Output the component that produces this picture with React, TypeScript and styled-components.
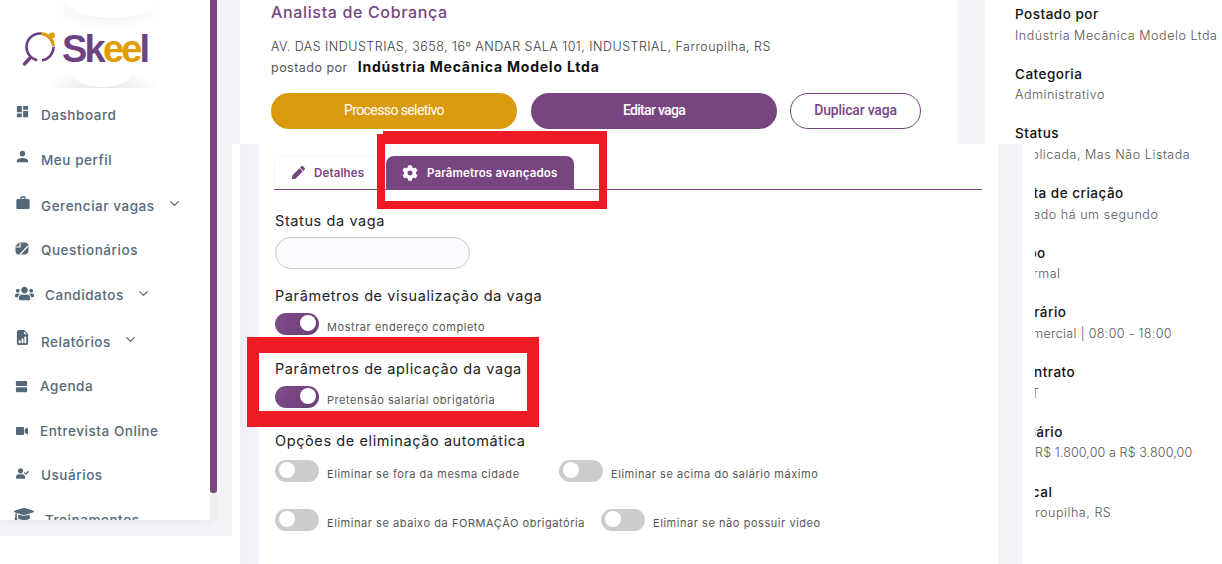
import * as React from 'react';
import styled, { createGlobalStyle } from 'styled-components';
import { FaCog, FaGraduationCap, FaPen, FaUserCheck, FaUsers, FaVideo } from 'react-icons/fa';
import { MdDashboard, MdPerson, MdViewAgenda, MdWork } from 'react-icons/md';
import { BsFileEarmarkBarGraphFill } from 'react-icons/bs';
import { FiChevronDown } from 'react-icons/fi';

const purple = '#784580';
const gold = '#d99a0e';
const panelGray = '#f3f4f9';
const menuGray = '#56697a';
const red = '#ed1c24';
const font = `Inter, 'Noto Sans', sans-serif`;

const GlobalStyle = createGlobalStyle`
  html, body {
    background: #fff;
    margin: 0;
    overflow: hidden;
  }
`;

const Page = styled.div`
  display: grid;
  font-family: ${font};
  grid-template-columns: 240px 775px 1fr;
  grid-template-rows: 144px 1fr;
  height: 564px;
  overflow: hidden;
  width: 1222px;
`;

/* left column */
const LeftColumn = styled.div`
  background: linear-gradient(${panelGray}, ${panelGray}) right top / 8px 144px no-repeat;
  grid-row: 1 / 3;
`;

const SidePanel = styled.div`
  background: ${panelGray};
  display: flex;
  height: 536px;
  width: 232px;
`;

const Sidebar = styled.aside`
  background: #fff;
  box-shadow: 0 2px 8px rgba(0, 0, 0, .05);
  height: 520px;
  overflow: hidden;
  width: 210px;
`;

const ScrollTrack = styled.div`
  background: #eee;
  border-radius: 0 0 3px 3px;
  height: 520px;
  width: 7px;
`;

const ScrollThumb = styled.div`
  background: ${purple};
  border-radius: 0 0 3px 3px;
  height: 493px;
`;

const LogoBlock = styled.div`
  align-items: center;
  box-sizing: border-box;
  display: flex;
  gap: 6px;
  height: 92px;
  padding: 4px 0 0 22px;
  position: relative;

  &::before, &::after {
    content: '';
    left: 45px;
    position: absolute;
    width: 115px;
  }

  &::before {
    background:
      radial-gradient(ellipse 46px 18px at 58% 0, #fff 98%, transparent 100%),
      radial-gradient(ellipse 58px 22px at 55% 30%, #eeeeee 0%, transparent 100%);
    height: 30px;
    top: 0;
  }

  &::after {
    background:
      radial-gradient(ellipse 29px 13px at 50% 0, #fff 98%, transparent 100%),
      radial-gradient(ellipse 58px 18px at 50% 100%, #e6e6e6 0%, transparent 100%);
    height: 14px;
    top: 74px;
  }
`;

const LogoMark = styled.svg`
  flex: none;
  height: 36px;
  margin-top: 3px;
  width: 34px;
`;

const LogoText = styled.span`
  color: #6b4380;
  font-family: 'Liberation Sans', sans-serif;
  font-size: 38px;
  font-weight: 700;
  letter-spacing: -2.8px;
  line-height: 1;
  position: relative;
  top: 1px;
`;

const LogoAccent = styled.span`
  color: #e09c00;
`;

const MenuItem = styled.div<{ $height: number; $left: number }>`
  align-items: center;
  color: ${menuGray};
  display: flex;
  font-size: 13.5px;
  font-weight: 500;
  height: ${p => p.$height}px;
  letter-spacing: .55px;
  padding-left: ${p => p.$left}px;
  white-space: nowrap;
`;

const MenuIcon = styled.span<{ $width: number; $lift: number }>`
  align-items: center;
  color: #546878;
  display: flex;
  flex: none;
  margin-top: ${p => -2 * p.$lift}px;
  width: ${p => p.$width}px;
`;

const Chevron = styled(FiChevronDown)`
  color: #546878;
  flex: none;
  font-size: 15px;
  margin: -4px 0 0 12px;
`;

/* main column */
const TopRow = styled.div`
  display: flex;
`;

const JobCard = styled.section`
  background: #fff;
  box-sizing: border-box;
  padding-left: 31px;
  width: 717px;
`;

const TopGutter = styled.div`
  background: ${panelGray};
  width: 28px;
`;

const JobTitle = styled.h1`
  color: ${purple};
  font-size: 16px;
  font-weight: 500;
  letter-spacing: .65px;
  line-height: 24px;
  margin: 0 0 13px;
`;

const Address = styled.div`
  color: #3d3d3d;
  font-size: 12.5px;
  font-weight: 300;
  letter-spacing: .48px;
  line-height: 20px;
`;

const PostedBy = styled(Address)`
  color: #555;
  font-weight: 400;
`;

const Company = styled.strong`
  color: #111;
  font-size: 14px;
  font-weight: 700;
  letter-spacing: .78px;
  margin-left: 6px;
`;

const ButtonRow = styled.div`
  display: flex;
  gap: 14px;
  margin-top: 15px;
`;

const ActionButton = styled.button<{ $kind: 'gold' | 'purple' | 'outline' }>`
  background: ${p => (p.$kind === 'gold' ? gold : p.$kind === 'purple' ? purple : '#fff')};
  border: ${p => (p.$kind === 'outline' ? `1px solid ${purple}` : 'none')};
  border-radius: 18px;
  box-sizing: border-box;
  color: ${p => (p.$kind === 'outline' ? purple : '#fff')};
  font-family: Roboto, sans-serif;
  font-size: 14px;
  font-weight: ${p => (p.$kind === 'gold' ? 400 : 500)};
  height: 36px;
  letter-spacing: ${p => (p.$kind === 'outline' ? '-.2px' : p.$kind === 'purple' ? '-.7px' : '-.6px')};
  margin-left: ${p => (p.$kind === 'outline' ? '-1px' : '0')};
  padding: 0 0 3px;
  width: ${p => (p.$kind === 'outline' ? '131px' : '246px')};
`;

const LowerPanel = styled.section`
  background: #fff;
  margin-right: -20px;
  padding-right: 13px;
  position: relative;
  z-index: 1;
`;

const LowerGutter = styled.div`
  background: linear-gradient(to right, #eeeff4, ${panelGray} 19px);
  height: 100%;
  padding: 0 24px 0 19px;
`;

const LowerBody = styled.div`
  background: #fff;
  box-sizing: border-box;
  height: 100%;
  padding: 11px 16px 0 15px;
`;

const TabRow = styled.div`
  border-bottom: 1px solid ${purple};
  box-sizing: border-box;
  display: flex;
  height: 35px;
  position: relative;
`;

const Tab = styled.div<{ $active?: boolean }>`
  align-items: center;
  background: ${p => (p.$active ? purple : '#fff')};
  border: ${p => (p.$active ? 'none' : '1px solid #f8f8f8')};
  border-bottom: none;
  border-radius: 8px 8px 0 0;
  box-sizing: border-box;
  color: ${p => (p.$active ? '#fff' : purple)};
  display: flex;
  font-size: 11.5px;
  font-weight: 600;
  gap: 9px;
  height: ${p => (p.$active ? '33px' : '34px')};
  letter-spacing: .15px;
  margin: ${p => (p.$active ? '1px 0 0 8px' : '0')};
  padding-left: ${p => (p.$active ? '16px' : '17px')};
  white-space: nowrap;
  width: ${p => (p.$active ? '188px' : '104px')};
`;

const Marker = styled.div`
  border-color: ${red};
  border-style: solid;
  box-sizing: border-box;
  pointer-events: none;
  position: absolute;
`;

const TabMarker = styled(Marker)`
  border-width: 13px 8px 8px;
  clip-path: polygon(6px 0, 100% 0, 100% 100%, 0 100%, 0 3px, 6px 3px);
  height: 78px;
  left: 103px;
  top: -24px;
  width: 230px;
`;

const SectionMarker = styled(Marker)`
  border-width: 16px 12px;
  height: 90px;
  left: -28px;
  top: -22px;
  width: 292px;
`;

const Form = styled.div`
  padding: 21px 0 0 1px;
`;

const Block = styled.div<{ $top: number }>`
  margin-top: ${p => p.$top}px;
  position: relative;
`;

const FieldLabel = styled.div`
  color: #222;
  font-size: 14.5px;
  font-weight: 400;
  letter-spacing: .6px;
  line-height: 20px;
`;

const StatusInput = styled.div`
  background: #fafaff;
  border: 1px solid #ccc;
  border-radius: 16px;
  box-sizing: border-box;
  height: 32px;
  margin-top: 6px;
  width: 195px;
`;

const OptionRow = styled.div<{ $top: number }>`
  display: flex;
  margin-top: ${p => p.$top}px;
`;

const Option = styled.div<{ $width?: number }>`
  display: flex;
  gap: 8px;
  width: ${p => (p.$width ? `${p.$width}px` : 'auto')};
`;

const Switch = styled.div<{ $on?: boolean }>`
  align-items: center;
  background: ${p => (p.$on ? `linear-gradient(135deg, #7f4d8b, #6c3d76)` : '#ccc')};
  border-radius: 11px;
  box-sizing: border-box;
  display: flex;
  flex: none;
  height: 22px;
  justify-content: ${p => (p.$on ? 'flex-end' : 'flex-start')};
  padding: 0 ${p => (p.$on ? '3px' : '0')} 0 ${p => (p.$on ? '0' : '4px')};
  width: 44px;
`;

const Knob = styled.div`
  background: #fff;
  border-radius: 50%;
  height: 16px;
  margin-top: -2px;
  width: 16px;
`;

const OptionText = styled.span`
  color: #555;
  font-size: 11px;
  letter-spacing: .55px;
  line-height: 16px;
  margin-top: 6px;
  white-space: nowrap;
`;

/* right column */
const InfoColumn = styled.aside`
  grid-column: 3;
  grid-row: 1 / 3;
  padding-top: 4px;
`;

const InfoBlock = styled.div`
  height: 59.7px;
`;

const InfoLabel = styled.div`
  color: #111;
  font-size: 13.5px;
  font-weight: 500;
  letter-spacing: .5px;
  line-height: 20px;
`;

const InfoValue = styled.div<{ $spacing: number }>`
  color: #555;
  font-size: 12.5px;
  font-weight: 300;
  letter-spacing: ${p => p.$spacing}px;
  line-height: 20px;
  margin-top: 1.5px;
  white-space: nowrap;
`;

const QuizIcon = () => (
  <svg width='14' height='13' viewBox='0 0 14 13'>
    <path fill='currentColor' d='M4 .5 L10 .5 Q13.5 .5 13.5 4 L13.5 8 Q13.5 12.5 9 12.5 L4 12.5 Q.5 12.5 .5 9 L.5 4 Z' />
    <path fill='none' stroke='#fff' strokeWidth='1.2' d='M.5 5 L5 5 L5 1 M5 12.5 L13 4' />
  </svg>
);

const menu = [
  { label: 'Dashboard', icon: <MdDashboard size={15} />, height: 45, left: 15, text: 26, lift: 3 },
  { label: 'Meu perfil', icon: <MdPerson size={17} />, height: 45, left: 14, text: 27, lift: 3 },
  { label: 'Gerenciar vagas', icon: <MdWork size={16} />, height: 47, left: 15, text: 26, lift: 3, arrow: true },
  { label: 'Questionários', icon: <QuizIcon />, height: 42, left: 15, text: 26, lift: 2 },
  { label: 'Candidatos', icon: <FaUsers size={19} />, height: 48, left: 15, text: 30, lift: 2, arrow: true },
  { label: 'Relatórios', icon: <BsFileEarmarkBarGraphFill size={15} />, height: 45, left: 15, text: 26, lift: 4, arrow: true },
  { label: 'Agenda', icon: <MdViewAgenda size={15} />, height: 44, left: 14, text: 26, lift: 0 },
  { label: 'Entrevista Online', icon: <FaVideo size={12} />, height: 45, left: 16, text: 24, lift: 0 },
  { label: 'Usuários', icon: <FaUserCheck size={13} />, height: 44, left: 16, text: 25, lift: 2 },
  { label: 'Treinamentos', icon: <FaGraduationCap size={20} />, height: 45, left: 14, text: 31, lift: 6 },
];

const info = [
  { label: 'Postado por', value: 'Indústria Mecânica Modelo Ltda', spacing: .55 },
  { label: 'Categoria', value: 'Administrativo', spacing: .55 },
  { label: 'Status', value: 'Publicada, Mas Não Listada', spacing: .55 },
  { label: 'Data de criação', value: 'Criado há um segundo', spacing: .55 },
  { label: 'Tipo', value: 'Normal', spacing: .55 },
  { label: 'Horário', value: 'Comercial | 08:00 - 18:00', spacing: .35 },
  { label: 'Contrato', value: 'CLT', spacing: .55 },
  { label: 'Salário', value: 'De R$ 1.800,00 a R$ 3.800,00', spacing: .12 },
  { label: 'Local', value: 'Farroupilha, RS', spacing: .55 },
];

const App: React.FC = () => (
  <Page>
    <GlobalStyle />
    <LeftColumn>
      <SidePanel>
        <Sidebar>
          <LogoBlock>
            <LogoMark viewBox='0 0 34 36'>
              <circle cx='18' cy='15' r='13.5' fill='none' stroke='#6b4380' strokeWidth='2.6' strokeDasharray='57 3 20 5' strokeDashoffset='-24' />
              <path d='M19 1.5 A13.5 13.5 0 0 1 31.5 14' fill='none' stroke='#e09c00' strokeWidth='2.8' />
              <circle cx='30' cy='3.5' r='3' fill='#e09c00' />
              <path d='M8 26 L2.5 32' stroke='#6b4380' strokeWidth='3.4' strokeLinecap='round' />
            </LogoMark>
            <LogoText>Sk<LogoAccent>ee</LogoAccent>l</LogoText>
          </LogoBlock>
          {menu.map(item => (
            <MenuItem key={item.label} $height={item.height} $left={item.left}>
              <MenuIcon $width={item.text} $lift={item.lift}>{item.icon}</MenuIcon>
              {item.label}
              {item.arrow && <Chevron />}
            </MenuItem>
          ))}
        </Sidebar>
        <ScrollTrack>
          <ScrollThumb />
        </ScrollTrack>
      </SidePanel>
    </LeftColumn>

    <TopRow>
      <JobCard>
        <JobTitle>Analista de Cobrança</JobTitle>
        <Address>AV. DAS INDUSTRIAS, 3658, 16º ANDAR SALA 101, INDUSTRIAL, Farroupilha, RS</Address>
        <PostedBy>postado por <Company>Indústria Mecânica Modelo Ltda</Company></PostedBy>
        <ButtonRow>
          <ActionButton $kind='gold'>Processo seletivo</ActionButton>
          <ActionButton $kind='purple'>Editar vaga</ActionButton>
          <ActionButton $kind='outline'>Duplicar vaga</ActionButton>
        </ButtonRow>
      </JobCard>
      <TopGutter />
    </TopRow>

    <LowerPanel>
      <LowerGutter>
        <LowerBody>
          <TabRow>
            <Tab><FaPen size={13} />Detalhes</Tab>
            <Tab $active><FaCog size={16} />Parâmetros avançados</Tab>
            <TabMarker />
          </TabRow>
          <Form>
            <FieldLabel>Status da vaga</FieldLabel>
            <StatusInput />
            <Block $top={17}>
              <FieldLabel>Parâmetros de visualização da vaga</FieldLabel>
              <OptionRow $top={7}>
                <Option>
                  <Switch $on><Knob /></Switch>
                  <OptionText>Mostrar endereço completo</OptionText>
                </Option>
              </OptionRow>
            </Block>
            <Block $top={24}>
              <FieldLabel>Parâmetros de aplicação da vaga</FieldLabel>
              <OptionRow $top={7}>
                <Option>
                  <Switch $on><Knob /></Switch>
                  <OptionText>Pretensão salarial obrigatória</OptionText>
                </Option>
              </OptionRow>
              <SectionMarker />
            </Block>
            <Block $top={23}>
              <FieldLabel>Opções de eliminação automática</FieldLabel>
              <OptionRow $top={9}>
                <Option $width={284}>
                  <Switch><Knob /></Switch>
                  <OptionText>Eliminar se fora da mesma cidade</OptionText>
                </Option>
                <Option>
                  <Switch><Knob /></Switch>
                  <OptionText>Eliminar se acima do salário máximo</OptionText>
                </Option>
              </OptionRow>
              <OptionRow $top={27}>
                <Option $width={326}>
                  <Switch><Knob /></Switch>
                  <OptionText>Eliminar se abaixo da FORMAÇÃO obrigatória</OptionText>
                </Option>
                <Option>
                  <Switch><Knob /></Switch>
                  <OptionText>Eliminar se não possuir video</OptionText>
                </Option>
              </OptionRow>
            </Block>
          </Form>
        </LowerBody>
      </LowerGutter>
    </LowerPanel>

    <InfoColumn>
      {info.map(item => (
        <InfoBlock key={item.label}>
          <InfoLabel>{item.label}</InfoLabel>
          <InfoValue $spacing={item.spacing}>{item.value}</InfoValue>
        </InfoBlock>
      ))}
    </InfoColumn>
  </Page>
);

export default App;
